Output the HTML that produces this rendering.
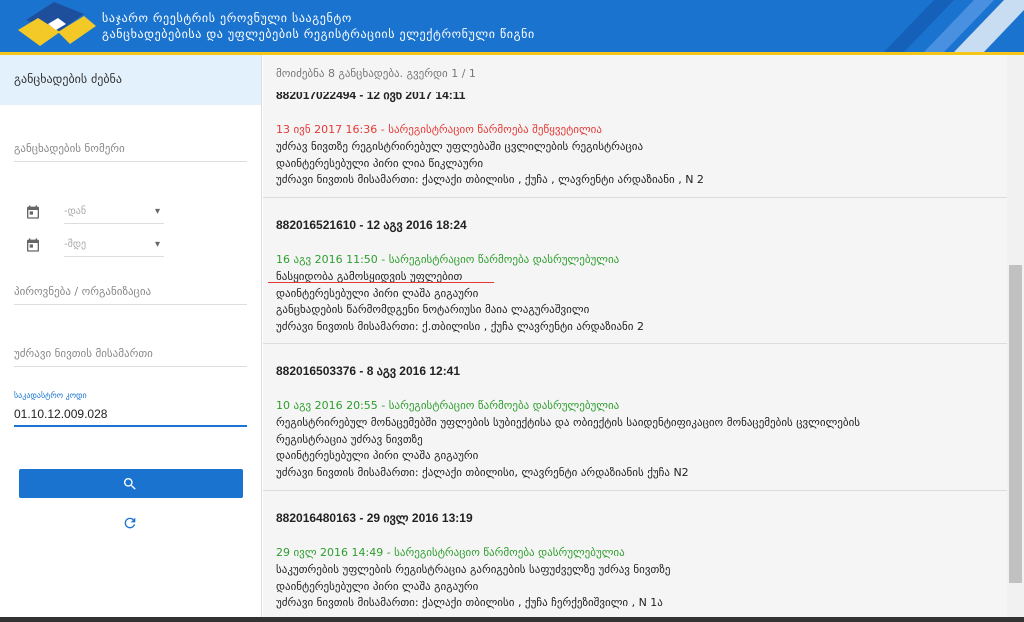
<!DOCTYPE html>
<html><head><meta charset="utf-8"><style>
*{margin:0;padding:0;box-sizing:border-box}
body{width:1024px;height:622px;overflow:hidden;font-family:"DejaVu Sans","Liberation Sans",sans-serif;background:#fff;position:relative}
.hdr{position:absolute;left:0;top:0;width:1024px;height:52px;background:#1a73cf;overflow:hidden}
.hdr .t{position:absolute;left:102px;top:10px;color:#fff;font-size:12px;line-height:16px;letter-spacing:0.6px}
.yl{position:absolute;left:0;top:52px;width:1024px;height:3px;background:#f5c518}
.left{position:absolute;left:0;top:55px;width:262px;height:562px;background:#fff;border-right:1px solid #ddd}
.lt{height:50px;background:#e3f1fc;padding:17px 14px;font-size:12px;color:#333}
.fld{position:absolute;left:14px;width:233px;border-bottom:1px solid #ddd;font-size:11px;color:#888;padding-bottom:6px}
.right{position:absolute;left:263px;top:55px;width:744px;height:562px;background:#f5f5f5;overflow:hidden;font-size:11px;color:#222}
.wrap{position:absolute;left:0;top:37px;width:744px;height:525px;overflow:hidden}
.ent{position:absolute;left:0;width:744px;border-bottom:1px solid #ddd;padding-left:13px}
.ent b{display:block;font-family:"Liberation Sans",sans-serif;font-size:12px;line-height:14px;color:#222;margin-top:20px}
.ent p{line-height:16.8px}
.ent p.f{margin-top:20px}
.g{color:#2e9e2e}.r{color:#e53935}
.sb{position:absolute;left:1007px;top:55px;width:17px;height:562px;background:#f1f1f1}
.sb div{position:absolute;left:2px;top:210px;width:13px;height:318px;background:#c1c1c1}
.bot{position:absolute;left:0;top:617px;width:1024px;height:5px;background:#333}
</style></head><body>
<div class="hdr">
<svg width="100" height="52" style="position:absolute;left:8px;top:0">
<polygon points="18,20 46,2 76,14 50,32" fill="#1d4f9c"/>
<polygon points="10,30 30,18 52,32 32,46" fill="#f3c928"/>
<polygon points="50,32 76,16 88,26 62,44" fill="#f3c928"/>
<polygon points="40,24 50,18 58,24 48,30" fill="#fff"/>
</svg>
<div class="t">საჯარო რეესტრის ეროვნული სააგენტო<br>განცხადებებისა და უფლებების რეგისტრაციის ელექტრონული წიგნი</div>
<svg width="140" height="52" style="position:absolute;left:884px;top:0"><polygon points="40,52 90,0 110,0 60,52" fill="#4a90e0"/><polygon points="70,52 120,0 140,0 140,10 100,52" fill="#c8dcf2"/><polygon points="0,52 50,0 70,0 20,52" fill="#1560b8"/></svg>
</div>
<div class="yl"></div>
<div class="left">
<div class="lt">განცხადების ძებნა</div>
<div class="fld" style="top:87px">განცხადების ნომერი</div>
<svg style="position:absolute;left:25px;top:149px" width="16" height="16" viewBox="0 0 24 24"><path fill="#666" d="M19 4h-1V2h-2v2H8V2H6v2H5a2 2 0 0 0-2 2v14a2 2 0 0 0 2 2h14a2 2 0 0 0 2-2V6a2 2 0 0 0-2-2zm0 16H5V9h14v11zM7 11h5v5H7z"/></svg>
<div class="fld" style="top:151px;left:64px;width:100px;color:#aaa;font-size:10px">-დან<span style="position:absolute;right:4px;top:0;color:#666">▾</span></div>
<svg style="position:absolute;left:25px;top:182px" width="16" height="16" viewBox="0 0 24 24"><path fill="#666" d="M19 4h-1V2h-2v2H8V2H6v2H5a2 2 0 0 0-2 2v14a2 2 0 0 0 2 2h14a2 2 0 0 0 2-2V6a2 2 0 0 0-2-2zm0 16H5V9h14v11zM7 11h5v5H7z"/></svg>
<div class="fld" style="top:184px;left:64px;width:100px;color:#aaa;font-size:10px">-მდე<span style="position:absolute;right:4px;top:0;color:#666">▾</span></div>
<div class="fld" style="top:230px">პიროვნება / ორგანიზაცია</div>
<div class="fld" style="top:292px">უძრავი ნივთის მისამართი</div>
<div style="position:absolute;left:14px;top:336px;font-size:8px;color:#1976d2">საკადასტრო კოდი</div>
<div class="fld" style="top:352px;color:#222;font-family:'Liberation Sans',sans-serif;font-size:12px;border-bottom:2px solid #1976d2;padding-bottom:4px">01.10.12.009.028</div>
<div style="position:absolute;left:19px;top:414px;width:224px;height:29px;background:#1a73cf;border-radius:2px"><svg style="position:absolute;left:103px;top:7px" width="16" height="16" viewBox="0 0 24 24"><path fill="#fff" d="M15.5 14h-.8l-.3-.3A6.5 6.5 0 1 0 9.5 16a6.5 6.5 0 0 0 4.2-1.6l.3.3v.8l5 5 1.5-1.5-5-5zm-6 0a4.5 4.5 0 1 1 0-9 4.5 4.5 0 0 1 0 9z"/></svg></div>
<svg style="position:absolute;left:122px;top:460px" width="16" height="16" viewBox="0 0 24 24"><path fill="#1976d2" d="M17.6 6.4A8 8 0 1 0 19.7 14h-2.1a6 6 0 1 1-1.4-6.2L13 11h7V4z"/></svg>
</div>
<div class="right">
<div style="position:absolute;left:13px;top:12px;color:#777;font-size:11px">მოიძებნა 8 განცხადება. გვერდი 1 / 1</div>
<div class="wrap">
<div class="ent" style="top:-24px;height:130px"><b>882017022494 - 12 ივნ 2017 14:11</b>
<p class="r f">13 ივნ 2017 16:36 - სარეგისტრაციო წარმოება შეწყვეტილია</p>
<p>უძრავ ნივთზე რეგისტრირებულ უფლებაში ცვლილების რეგისტრაცია</p>
<p>დაინტერესებული პირი ლია წიკლაური</p>
<p>უძრავი ნივთის მისამართი: ქალაქი თბილისი , ქუჩა , ლავრენტი არდაზიანი , N 2</p></div>
<div class="ent" style="top:106px;height:146px"><b>882016521610 - 12 აგვ 2016 18:24</b>
<p class="g f">16 აგვ 2016 11:50 - სარეგისტრაციო წარმოება დასრულებულია</p>
<p>ნასყიდობა გამოსყიდვის უფლებით</p>
<p>დაინტერესებული პირი ლაშა გიგაური</p>
<p>განცხადების წარმომდგენი ნოტარიუსი მაია ლაგურაშვილი</p>
<p>უძრავი ნივთის მისამართი: ქ.თბილისი , ქუჩა ლავრენტი არდაზიანი 2</p>
<div style="position:absolute;left:5px;top:84px;width:226px;height:1px;background:#e53935"></div></div>
<div class="ent" style="top:252px;height:147px"><b>882016503376 - 8 აგვ 2016 12:41</b>
<p class="g f">10 აგვ 2016 20:55 - სარეგისტრაციო წარმოება დასრულებულია</p>
<p>რეგისტრირებულ მონაცემებში უფლების სუბიექტისა და ობიექტის საიდენტიფიკაციო მონაცემების ცვლილების</p>
<p>რეგისტრაცია უძრავ ნივთზე</p>
<p>დაინტერესებული პირი ლაშა გიგაური</p>
<p>უძრავი ნივთის მისამართი: ქალაქი თბილისი, ლავრენტი არდაზიანის ქუჩა N2</p></div>
<div class="ent" style="top:399px;height:140px;border:none"><b>882016480163 - 29 ივლ 2016 13:19</b>
<p class="g f">29 ივლ 2016 14:49 - სარეგისტრაციო წარმოება დასრულებულია</p>
<p>საკუთრების უფლების რეგისტრაცია გარიგების საფუძველზე უძრავ ნივთზე</p>
<p>დაინტერესებული პირი ლაშა გიგაური</p>
<p>უძრავი ნივთის მისამართი: ქალაქი თბილისი , ქუჩა ჩერქეზიშვილი , N 1ა</p></div>
</div>
</div>
<div class="sb"><div></div></div>
<div class="bot"></div>
</body></html>
